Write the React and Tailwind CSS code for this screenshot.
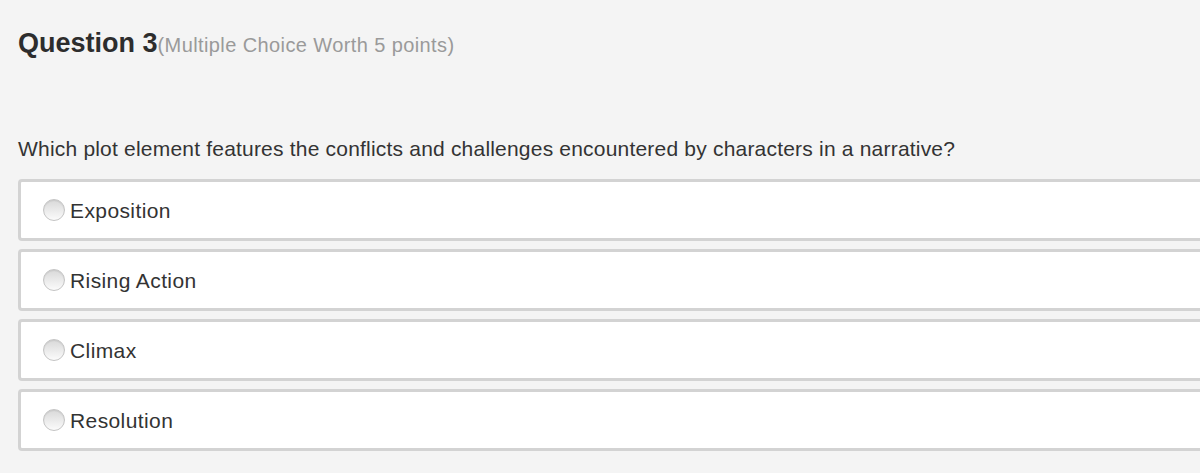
const options = ["Exposition", "Rising Action", "Climax", "Resolution"];

function Radio() {
  return (
    <span className="block h-[22px] w-[22px] shrink-0 rounded-full border border-[#c4c4c4] bg-gradient-to-b from-[#d9d9d9] to-[#fbfbfb] shadow-[inset_0_1px_1px_rgba(0,0,0,0.08)]" />
  );
}

export default function App() {
  return (
    <div
      className="h-[473px] w-[1200px] overflow-hidden bg-[#f4f4f4] pl-[18px] text-[#333333]"
      style={{ fontFamily: '"Liberation Sans", Arial, sans-serif' }}
    >
      <div className="flex items-baseline pt-[26px]">
        <h1 className="text-[27px] font-bold leading-[34px] text-[#2d2d2d]">Question 3</h1>
        <span className="text-[20px] leading-[34px] tracking-[0.4px] text-[#9a9a9a]">(Multiple Choice Worth 5 points)</span>
      </div>

      <p className="mt-[74px] text-[21px] leading-[26px] tracking-[0.2px]">
        Which plot element features the conflicts and challenges encountered by characters in a narrative?
      </p>

      <div className="mt-[17px] mr-[-30px] flex flex-col gap-[8px]">
        {options.map((opt) => (
          <label
            key={opt}
            className="flex h-[62px] items-center gap-[5px] rounded-[4px] border-[3px] border-[#d3d3d3] bg-white pl-[22px]"
          >
            <Radio />
            <span className="text-[21px] leading-none tracking-[0.4px]">{opt}</span>
          </label>
        ))}
      </div>
    </div>
  );
}
